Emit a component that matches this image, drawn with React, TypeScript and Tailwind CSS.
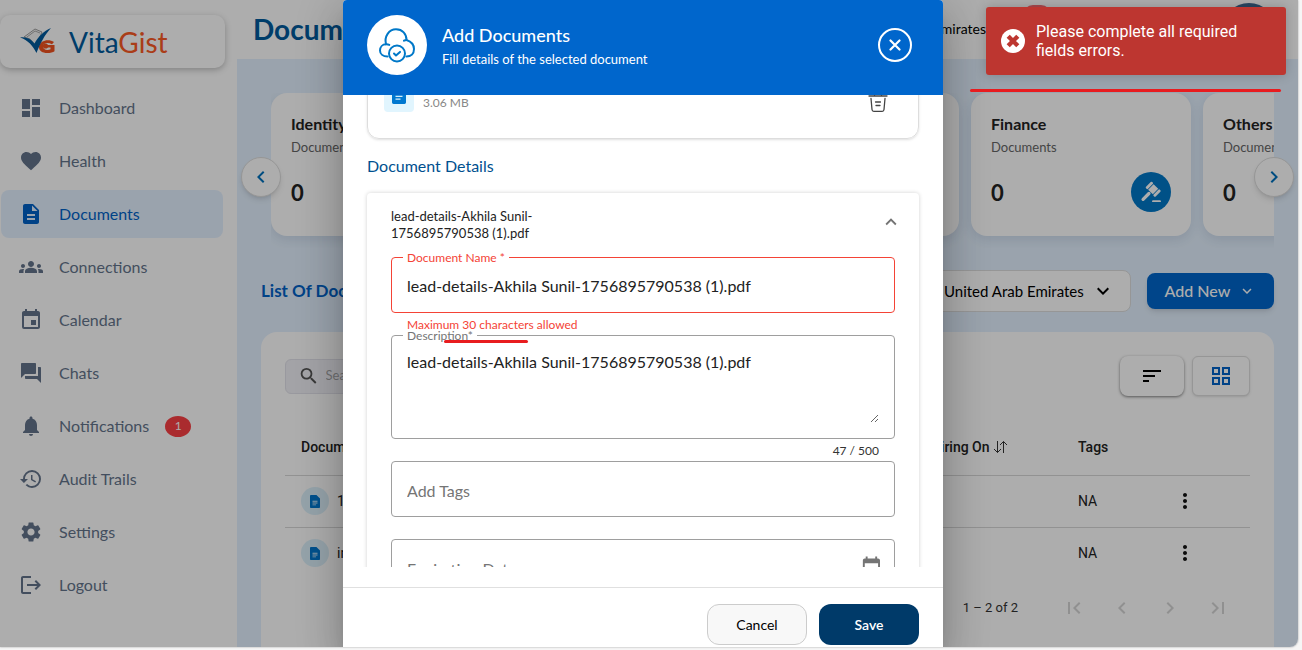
import React, { useState } from 'react'
import {
  MdChevronLeft,
  MdChevronRight,
  MdDashboard,
  MdDescription,
  MdEvent,
  MdExpandMore,
  MdExpandLess,
  MdFavorite,
  MdFirstPage,
  MdForum,
  MdGridView,
  MdGroups,
  MdHistory,
  MdLastPage,
  MdLogout,
  MdMoreVert,
  MdNotifications,
  MdSearch,
  MdSettings,
  MdSort,
} from 'react-icons/md'

const FILE_NAME = 'lead-details-Akhila Sunil-1756895790538 (1).pdf'

const navItems = [
  { label: 'Dashboard', icon: MdDashboard },
  { label: 'Health', icon: MdFavorite },
  { label: 'Documents', icon: MdDescription },
  { label: 'Connections', icon: MdGroups },
  { label: 'Calendar', icon: MdEvent },
  { label: 'Chats', icon: MdForum },
  { label: 'Notifications', icon: MdNotifications, count: 1 },
  { label: 'Audit Trails', icon: MdHistory },
  { label: 'Settings', icon: MdSettings },
  { label: 'Logout', icon: MdLogout },
]

const categories = ['Identity', 'Insurance', 'Medical', 'Finance', 'Others']

const rows = [
  { name: '1000123', expiring: '', tags: 'NA' },
  { name: 'invoice', expiring: '', tags: 'NA' },
]

function App() {
  const [modalOpen, setModalOpen] = useState(true)

  return (
    <div className="h-screen bg-[#f6f6f6] pr-1 pb-[3px] font-['Lato','Open_Sans',sans-serif]">
      <div className="relative h-full overflow-hidden rounded-br-lg bg-white shadow-[0_0_2px_rgba(0,0,0,0.4)]">
        <div className="flex h-full">
          <Sidebar />
          <main className="min-w-0 flex-1 bg-[#e4f1ff]">
            <TopBar />
            <div className="px-6 pt-[34px]">
              <CategoryCarousel />
              <ListHeader />
              <DocumentTable />
            </div>
          </main>
        </div>

        {modalOpen && <AddDocumentsModal onClose={() => setModalOpen(false)} />}

        <Toast />

        {/* MARKERS */}
        <div className="absolute top-[89px] right-[17px] h-[3px] w-[311px] rounded-full bg-[#e81c1f]" />
      </div>
    </div>
  )
}

export default App

/* ---------------- PAGE ---------------- */

function Sidebar() {
  return (
    <aside className="w-[237px] shrink-0 bg-white pt-[15px]">
      <div className="flex h-[53px] w-[225px] items-center gap-[13px] rounded-[10px] bg-white pl-5 shadow-[0_2px_6px_rgba(0,0,0,0.25)]">
        <Logo />
        <span className="text-[28px] leading-none text-[#005a9c]">
          Vita<span className="text-[#fb5a26]">Gist</span>
        </span>
      </div>

      <nav className="mt-4 flex flex-col gap-[5px] pr-[14px] pl-px">
        {navItems.map(({ label, icon: Icon, count }) => (
          <a
            key={label}
            href="#"
            className={`flex h-12 items-center rounded-lg pl-[18px] text-base ${
              label === 'Documents' ? 'bg-[#e4f1ff] text-[#0062c8]' : 'text-[#64748b]'
            }`}
          >
            <Icon size={24} />
            <span className="ml-4">{label}</span>
            {count && (
              <span className="ml-4 flex h-[21px] w-[26px] items-center justify-center rounded-[50%] bg-[#fb4044] text-xs text-white">
                {count}
              </span>
            )}
          </a>
        ))}
      </nav>
    </aside>
  )
}

function TopBar() {
  return (
    <header className="flex h-[59px] items-center bg-white pr-[22px] pb-[2px] pl-4">
      <h1 className="text-[28px] font-bold text-[#005a9c]">Documents</h1>
      <span className="ml-auto text-sm text-black">United Arab Emirates</span>
      <span className="mr-[171px] mb-7 ml-[37px] h-5 w-7 rounded-full bg-[#fb6a70]" />
      <span className="mt-[2px] h-[54px] w-[54px] shrink-0 rounded-full bg-[#3d6790]" />
    </header>
  )
}

function CategoryCarousel() {
  return (
    <section className="relative">
      <div className="ml-[10px] flex gap-3 overflow-hidden pb-3">
        {categories.map(name => (
          <article
            key={name}
            className="flex h-[143px] w-[220px] shrink-0 flex-col rounded-[16px] bg-white px-5 pt-5 shadow-[0_4px_12px_rgba(30,60,90,0.12)] first:w-[224px]"
          >
            <h3 className="text-base leading-[22px] font-bold text-[#222]">{name}</h3>
            <p className="text-[13px] leading-6 text-[#666]">Documents</p>
            <div className="mt-[13px] flex items-center justify-between">
              <span className="text-[22px] font-bold text-[#222]">0</span>
              <span className="flex h-10 w-10 items-center justify-center rounded-full bg-[#0078c8] text-white">
                <GavelIcon />
              </span>
            </div>
          </article>
        ))}
      </div>

      <button
        aria-label="Previous"
        className="absolute top-16 -left-5 flex h-10 w-10 items-center justify-center rounded-full border border-[#ddd] bg-white text-[#0071bd] shadow-md"
      >
        <MdChevronLeft size={24} />
      </button>
      <button
        aria-label="Next"
        className="absolute top-16 -right-5 flex h-10 w-10 items-center justify-center rounded-full border border-[#ddd] bg-white text-[#0071bd] shadow-md"
      >
        <MdChevronRight size={24} />
      </button>
    </section>
  )
}

function ListHeader() {
  return (
    <div className="mt-[22px] flex items-center gap-4">
      <h2 className="mr-auto text-[17px] font-bold text-[#0062c8]">List Of Documents</h2>
      <div className="relative">
        <select
          aria-label="Country"
          className="h-[42px] w-[230px] appearance-none rounded-lg border border-[#ddd] bg-white pl-[42px] text-[15px] text-black"
        >
          <option>United Arab Emirates</option>
        </select>
        <MdExpandMore size={24} className="pointer-events-none absolute top-[9px] right-4" />
      </div>
      <button className="flex h-9 w-[127px] items-center justify-center gap-2 rounded-lg bg-[#0066cc] text-base font-medium text-white shadow-md">
        Add New <MdExpandMore size={18} />
      </button>
    </div>
  )
}

function DocumentTable() {
  return (
    <section className="mt-5 h-[400px] rounded-t-[16px] bg-white px-6 pt-6">
      <div className="flex items-center gap-2">
        <label className="mr-auto flex h-[35px] w-[300px] items-center gap-[6px] rounded-md border border-[#e2e2ea] bg-[#f0f0f6] px-3 text-[#555]">
          <MdSearch size={24} />
          <input aria-label="Search" placeholder="Search" className="w-full text-[13px] outline-none" />
        </label>
        <button
          aria-label="List view"
          className="flex h-10 w-16 items-center justify-center rounded-lg bg-white text-black shadow-[0_1px_3px_rgba(0,0,0,0.5)]"
        >
          <MdSort size={24} />
        </button>
        <button
          aria-label="Grid view"
          className="flex h-10 w-[58px] items-center justify-center rounded-md border border-[#ddd] bg-white text-[#0062c8] shadow-sm"
        >
          <MdGridView size={24} />
        </button>
      </div>

      <table className="mt-[23px] w-full table-fixed text-left font-['Roboto',sans-serif] text-sm text-[#222]">
        <thead>
          <tr className="h-14 border-b border-[#d8d8d8]">
            <th className="pl-4 font-medium">Document Name</th>
            <th className="w-[160px] pl-4 font-medium">
              <span className="flex items-center gap-[3px]">
                Expiring On <SortArrows />
              </span>
            </th>
            <th className="w-[105px] pl-4 font-medium">Tags</th>
            <th className="w-[83px]" aria-label="Actions" />
          </tr>
        </thead>
        <tbody>
          {rows.map(row => (
            <tr key={row.name} className="h-[52px] border-b border-[#d8d8d8] last:border-0">
              <td className="pl-4">
                <span className="flex items-center gap-2">
                  <span className="flex h-7 w-7 items-center justify-center rounded-full bg-[#dcf1fb]">
                    <FileIcon className="h-[13px] w-[10px]" />
                  </span>
                  {row.name}
                </span>
              </td>
              <td className="pl-4">{row.expiring}</td>
              <td className="pl-4">{row.tags}</td>
              <td>
                <button aria-label="More" className="block px-[6px] py-1 text-[#111]">
                  <MdMoreVert size={24} />
                </button>
              </td>
            </tr>
          ))}
        </tbody>
      </table>

      <div className="mt-[5px] flex items-center justify-end pr-2 font-['Roboto',sans-serif] text-[13px] text-[#333]">
        <span className="mr-8">1 – 2 of 2</span>
        {[MdFirstPage, MdChevronLeft, MdChevronRight, MdLastPage].map((Icon, i) => (
          <button key={i} aria-label={`Page ${i}`} className="flex h-12 w-12 items-center justify-center text-[#d4d4d4]">
            <Icon size={24} />
          </button>
        ))}
      </div>
    </section>
  )
}

/* ---------------- MODAL ---------------- */

function AddDocumentsModal({ onClose }: { onClose: () => void }) {
  return (
    <div className="absolute inset-0 flex justify-center bg-black/32 pr-3">
      <div
        role="dialog"
        aria-label="Add Documents"
        className="flex w-[600px] flex-col overflow-hidden rounded-t bg-white shadow-[0_11px_15px_-7px_rgba(0,0,0,0.2),0_24px_38px_3px_rgba(0,0,0,0.14),0_9px_46px_8px_rgba(0,0,0,0.12)]"
      >
        {/* HEADER */}
        <div className="z-10 flex h-[95px] shrink-0 items-center bg-[#0066cc] pr-[31px] pb-[5px] pl-6 text-white">
          <span className="flex h-[60px] w-[60px] items-center justify-center rounded-full bg-white">
            <CloudCheckIcon />
          </span>
          <div className="mt-1 ml-[15px]">
            <h2 className="text-[18px] leading-6 font-medium">Add Documents</h2>
            <p className="text-[13px] leading-6">Fill details of the selected document</p>
          </div>
          <button
            onClick={onClose}
            aria-label="Close"
            className="ml-auto flex h-[34px] w-[34px] items-center justify-center rounded-full border-2 border-white"
          >
            <svg viewBox="0 0 12 12" className="h-3 w-3" stroke="currentColor" strokeWidth="2.2" strokeLinecap="round">
              <path d="M1.5 1.5l9 9M10.5 1.5l-9 9" />
            </svg>
          </button>
        </div>

        {/* BODY */}
        <div className="min-h-0 flex-1 overflow-hidden px-6">
          <div className="-mt-[39px] flex h-[83px] items-start rounded-xl border border-[#ddd] px-4 pt-[19px] shadow-sm">
            <span className="flex h-9 w-[30px] items-center justify-center rounded bg-[#e1f5fe]">
              <FileIcon className="h-5 w-[14px]" />
            </span>
            <p className="ml-[9px] pt-[18px] text-xs leading-[17px] text-[#888]">3.06 MB</p>
            <button aria-label="Remove file" className="mt-3 mr-[14px] ml-auto">
              <TrashIcon />
            </button>
          </div>

          <h3 className="mt-[15px] text-base leading-6 text-[#00508f]">Document Details</h3>

          <div className="mt-[15px] rounded px-6 pt-[15px] pb-6 shadow-[0_0_4px_rgba(0,0,0,0.18)]">
            <button className="flex w-full items-start justify-between text-left text-[13px] leading-[17px] text-[#222]">
              <span className="w-[160px] break-words">{FILE_NAME}</span>
              <MdExpandLess size={22} className="mt-[3px] -mr-[7px] text-[#757575]" />
            </button>

            {/* NAME */}
            <div className="relative mt-[15px]">
              <label
                htmlFor="doc-name"
                className="absolute -top-[7px] left-3 bg-white px-1 text-xs leading-4 text-[#f44336]"
              >
                Document Name *
              </label>
              <input
                id="doc-name"
                defaultValue={FILE_NAME}
                className="block h-14 w-full rounded border border-[#f44336] px-[15px] text-base text-[#222] outline-none"
              />
            </div>
            <p className="pt-[3px] pb-px pl-4 text-xs leading-[18px] text-[#f44336]">Maximum 30 characters allowed</p>

            {/* DESCRIPTION */}
            <div className="relative h-[104px] rounded border border-[#9e9e9e] px-[15px] pt-[14px]">
              <label
                htmlFor="doc-description"
                className="absolute -top-2 left-[11px] z-10 px-1 text-xs leading-4 text-[#757575]"
              >
                <span className="absolute inset-x-0 top-[7px] -z-10 h-px bg-white" />
                Description*
              </label>
              <textarea
                id="doc-description"
                defaultValue={FILE_NAME}
                className="block h-[73px] w-full resize-y text-base leading-6 text-[#222] outline-none"
              />
              <div className="absolute top-1 left-[52px] z-20 h-[3px] w-[84px] rounded-full bg-[#e81c1f]" />
            </div>
            <p className="pt-[3px] pr-4 pb-px text-right text-xs leading-[18px] text-[#333]">47 / 500</p>

            <input
              aria-label="Add Tags"
              placeholder="Add Tags"
              className="block h-14 w-full rounded border border-[#9e9e9e] px-[15px] pt-[3px] text-base outline-none placeholder:text-[#757575]"
            />

            <div className="mt-[22px] flex h-14 items-center rounded border border-[#9e9e9e] pr-[11px] pl-[15px]">
              <input
                aria-label="Expiration Date"
                placeholder="Expiration Date"
                className="w-full pt-[3px] text-base outline-none placeholder:text-[#757575]"
              />
              <MdEvent size={24} className="text-[#757575]" />
            </div>
          </div>
        </div>

        {/* FOOTER */}
        <div className="z-10 mt-5 flex shrink-0 justify-end gap-3 border-t border-[#e0e0e0] pt-4 pr-6 pb-[2px] text-sm">
          <button
            onClick={onClose}
            className="h-[41px] w-[100px] rounded-xl border border-[#ccc] bg-[#f8f8f8] text-black"
          >
            Cancel
          </button>
          <button className="h-[41px] w-[100px] rounded-xl bg-[#003a69] font-semibold text-white">Save</button>
        </div>
      </div>
    </div>
  )
}

function Toast() {
  return (
    <div
      role="alert"
      className="absolute top-[7px] right-3 flex h-[68px] w-[300px] items-center rounded-[3px] bg-[#bd3630] pl-[15px] font-['Roboto',sans-serif] text-base leading-[19px] text-white shadow-[0_0_12px_rgba(0,0,0,0.2)]"
    >
      <svg viewBox="0 0 24 24" className="mr-[11px] h-6 w-6 shrink-0">
        <circle cx="12" cy="12" r="12" fill="#fff" />
        <path d="M7.2 7.2l9.600 9.600M16.800 7.200l-9.600 9.600" stroke="#bd3630" strokeWidth="4.4" />
      </svg>
      <p className="w-[215px]">Please complete all required fields errors.</p>
    </div>
  )
}

/* ---------------- ICONS ---------------- */

function Logo() {
  return (
    <svg viewBox="0 0 36 28" className="h-7 w-9" fill="none">
      <path d="M4 9L15 1l7 3-3 7-4 6-5-6z" fill="#f4f4f4" stroke="#888" strokeWidth="0.8" />
      <path d="M7 9l8-6 5 2" stroke="#888" strokeWidth="0.7" />
      <path
        d="M34 14c-5-3.500-14-2-15 4.500-.5 4.500 4 6.500 8 6.500 3.500 0 6-.8 7.500-1.800V17H26v2.500h4.500v1.800c-3 1.200-7.500.8-7.500-2.800s5-4.500 9-2.200z"
        fill="#f0521f"
      />
      <circle cx="25.500" cy="18" r="2.600" fill="#f0521f" />
      <path d="M0 9.500c6-1 10.500 1 14.500 6C18 9 23.500 3 31 0c-6.500 7-10.500 15-14.500 25C13 18 8 12 0 9.500z" fill="#005a9c" />
    </svg>
  )
}

function GavelIcon() {
  return (
    <svg viewBox="0 0 20 20" className="h-[22px] w-[22px]" fill="currentColor">
      <g transform="rotate(45 12 7.500)">
        <rect x="5.800" y="3.500" width="2.600" height="8" rx="1" />
        <rect x="9" y="4" width="6" height="7" />
        <rect x="15.600" y="3.500" width="2.600" height="8" rx="1" />
        <rect x="10.500" y="11.500" width="3" height="10.500" rx="1.500" />
      </g>
      <path d="M12 17.500h6c.6 0 1 .4 1 1v.5h-8v-.5c0-.6.4-1 1-1z" />
    </svg>
  )
}

function CloudCheckIcon() {
  return (
    <svg
      viewBox="0 0 36 36"
      className="h-9 w-9"
      fill="none"
      stroke="#0078c8"
      strokeWidth="2"
      strokeLinecap="round"
      strokeLinejoin="round"
    >
      <path d="M8.500 29.500C4 29.500 1 27 1 23.500c0-3.500 2.500-6.200 6-6.200-2-7.800 3-15 10-15 6.500 0 10.500 4.700 10.500 10.700 4.500 1.500 7.500 4.500 7.500 9 0 4.700-3 7.500-7.500 7.500" />
      <path d="M7 17.300c1.200-.1 2.300.1 3.300.6M27.500 13c-1 0-1.800.3-2.500.7" />
      <circle cx="18" cy="26.500" r="8" fill="#fff" />
      <path d="M15 26.500l2 2 4-3.600" />
    </svg>
  )
}

function FileIcon({ className }: { className: string }) {
  return (
    <svg viewBox="0 0 14 18" className={className} preserveAspectRatio="none">
      <path d="M1.500 0H9l5 5v11.500c0 .8-.7 1.500-1.500 1.500h-11C.7 18 0 17.300 0 16.500v-15C0 .7.7 0 1.500 0z" fill="#0078d0" />
      <path d="M3.500 8h7v1.200h-7zM3.500 10.500h7v1.200h-7zM3.500 13h5v1.200h-5z" fill="#d5ecfa" />
    </svg>
  )
}

function TrashIcon() {
  return (
    <svg viewBox="0 0 20 24" className="h-6 w-5" fill="none" stroke="#444" strokeWidth="1.300" strokeLinecap="round">
      <path d="M1 8h18M6.500 7V5c0-1 .6-1.500 1.500-1.500h4c.9 0 1.500.5 1.500 1.500v2" />
      <path d="M3 10.500l1 11c.1 1.200.7 1.800 1.800 1.800h8.400c1.100 0 1.700-.6 1.800-1.800l1-11M7.500 14h5M8 17.500h4" />
    </svg>
  )
}

function SortArrows() {
  return (
    <svg viewBox="0 0 15 14" className="h-[14px] w-[15px]" fill="none" stroke="#333">
      <path d="M4.500 1v11.500M1 9l3.500 3.500L8 9M10.500 13V1.500M7 5l3.500-3.500L14 5" />
    </svg>
  )
}
